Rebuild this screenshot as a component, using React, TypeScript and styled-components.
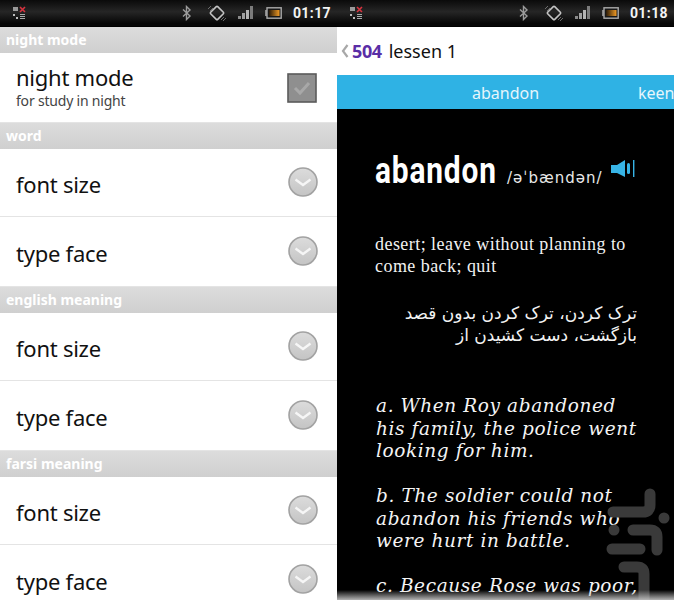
import React from 'react'
import styled, { createGlobalStyle } from 'styled-components'

const GlobalStyle = createGlobalStyle`
  html, body {
    margin: 0;
    padding: 0;
    background: #fff;
    overflow: hidden;
  }
  * {
    box-sizing: border-box;
  }
`

const Screens = styled.div`
  display: flex;
  width: 674px;
  height: 600px;
  overflow: hidden;
  font-family: 'Noto Sans', 'Open Sans', sans-serif;
`

const Screen = styled.div<{ $bg: string }>`
  position: relative;
  flex: none;
  display: flex;
  flex-direction: column;
  width: 337px;
  height: 600px;
  overflow: hidden;
  background: ${(p) => p.$bg};
`

const StatusBarWrap = styled.div`
  flex: none;
  display: flex;
  align-items: center;
  height: 27px;
  padding: 0 6px 1px 12px;
  background: linear-gradient(#0a0a0a, #262626 45%, #060606 90%);
  border-bottom: 1px solid #000;
`

const StatusRight = styled.div`
  display: flex;
  align-items: center;
  margin-left: auto;
`

const Clock = styled.span`
  margin-left: 11px;
  color: #f4f4f4;
  font-family: 'Roboto', sans-serif;
  font-size: 14px;
  font-weight: 700;
  letter-spacing: 0.4px;
`

const SectionHeader = styled.div`
  flex: none;
  height: 26px;
  padding-left: 6px;
  background: linear-gradient(#dcdcdc, #cfcfcf);
  color: #fff;
  font-size: 14px;
  font-weight: 700;
  line-height: 26px;
`

const Row = styled.div<{ $height: number }>`
  flex: none;
  display: flex;
  align-items: center;
  justify-content: space-between;
  height: ${(p) => p.$height}px;
  padding: 0 20px 0 16px;
  border-bottom: 1px solid #e4e4e4;
  background: #fff;
`

const RowText = styled.div`
  display: flex;
  flex-direction: column;
`

const RowTitle = styled.span`
  color: #111;
  font-size: 22px;
  letter-spacing: -0.25px;
  line-height: 30px;
`

const RowLabel = styled(RowTitle)`
  margin-top: 2px;
`

const NightTitle = styled(RowTitle)`
  line-height: 27px;
`

const RowSubtitle = styled.span`
  color: #444;
  font-size: 14px;
  letter-spacing: -0.2px;
  line-height: 20px;
`

const TitleBar = styled.div`
  flex: none;
  display: flex;
  align-items: center;
  height: 48px;
  padding-left: 4px;
  background: #fff;
`

const Brand = styled.span`
  margin-left: 3px;
  color: #5a2ea6;
  font-size: 18px;
  font-weight: 700;
  letter-spacing: -0.4px;
`

const LessonName = styled.span`
  margin-left: 7px;
  color: #111;
  font-size: 18px;
`

const Tabs = styled.div`
  position: relative;
  flex: none;
  height: 34px;
  background: #2fb2e4;
`

const Tab = styled.span<{ $left: number }>`
  position: absolute;
  top: 0;
  left: ${(p) => p.$left}px;
  color: #e6f6fc;
  font-size: 16px;
  line-height: 37px;
  white-space: nowrap;
`

const Content = styled.div`
  flex: 1;
  min-height: 0;
  padding: 43px 0 0 38px;
  background: #000;
  color: #f2f2f2;
`

const WordRow = styled.div`
  display: flex;
  align-items: flex-end;
  height: 38px;
`

const Word = styled.span`
  width: 132px;
  color: #fff;
  font-family: 'Roboto', sans-serif;
  font-size: 36px;
  font-weight: 700;
  letter-spacing: 1px;
  line-height: 38px;
  transform: scaleX(0.83);
  transform-origin: left;
`

const Phonetic = styled.span`
  color: #e8e8e8;
  font-family: 'DejaVu Sans', sans-serif;
  font-size: 15px;
  letter-spacing: 1px;
  line-height: 24px;
`

const Definition = styled.p`
  width: 270px;
  margin: 43px 0 0;
  font-family: 'Liberation Serif', serif;
  font-size: 18px;
  letter-spacing: 0.45px;
  line-height: 22px;
`

const Farsi = styled.p`
  width: 262px;
  margin: 25px 0 0;
  direction: rtl;
  font-family: 'DejaVu Sans', serif;
  font-size: 17px;
  line-height: 22px;
`

const Examples = styled.div`
  display: flex;
  flex-direction: column;
  gap: 22.5px;
  margin: 49px 0 0 1px;
`

const Example = styled.p`
  width: 262px;
  margin: 0;
  color: #f4f4f4;
  font-family: 'DejaVu Serif', serif;
  font-size: 18.5px;
  font-style: italic;
  letter-spacing: 0.6px;
  line-height: 22.5px;
`

const Watermark = styled.svg`
  position: absolute;
  right: 0;
  bottom: 0;
`

const BottomFade = styled.div`
  position: absolute;
  left: 0;
  right: 0;
  bottom: 0;
  height: 10px;
  background: linear-gradient(rgba(150, 150, 150, 0), rgba(190, 190, 190, 0.95));
`

const NotificationIcon = () => (
  <svg width="15" height="15" viewBox="0 0 15 15">
    <rect x="1" y="2" width="5" height="4" fill="#9a9a9a" />
    <path d="M8 2l5 5M13 2l-5 5" stroke="#d8333f" strokeWidth="1.6" />
    <rect x="1" y="9" width="2" height="2" fill="#bbb" />
    <rect x="4" y="12" width="2" height="2" fill="#bbb" />
    <path d="M8 9.5h5M8 11.5h5M8 13.5h5" stroke="#aaa" strokeWidth="1" />
  </svg>
)

const BluetoothIcon = () => (
  <svg width="12" height="16" viewBox="0 0 12 16">
    <path d="M2 4.5l7 6.5-3.5 3.5V1.5L9 5 2 11.5" fill="none" stroke="#9c9c9c" strokeWidth="1.4" />
  </svg>
)

const RotateIcon = () => (
  <svg width="20" height="18" viewBox="0 0 20 18" style={{ marginLeft: 14 }}>
    <rect x="5" y="4" width="10" height="10" rx="1" transform="rotate(45 10 9)" fill="none" stroke="#c4c4c4" strokeWidth="1.6" />
    <path d="M1 5l3-3M3 7l3-3M14 16l3-3M16 17l3-3" stroke="#777" strokeWidth="0.9" />
  </svg>
)

const SignalIcon = () => (
  <svg width="16" height="15" viewBox="0 0 16 15" style={{ marginLeft: 11 }}>
    <rect x="0" y="11" width="3" height="3" fill="#8a8a8a" />
    <rect x="4" y="8" width="3" height="6" fill="#a0a0a0" />
    <rect x="8" y="5" width="3" height="9" fill="#b4b4b4" />
    <rect x="12" y="1" width="3" height="13" fill="#7c7c7c" />
  </svg>
)

const BatteryIcon = () => (
  <svg width="17" height="12" viewBox="0 0 17 12" style={{ marginLeft: 11 }}>
    <defs>
      <linearGradient id="batteryFill" x1="0" x2="1" y1="0" y2="0">
        <stop offset="0" stopColor="#2a1a08" />
        <stop offset="1" stopColor="#f09a24" />
      </linearGradient>
    </defs>
    <rect x="0" y="3" width="2" height="6" fill="#8a8a8a" />
    <rect x="2" y="0.8" width="14.2" height="10.4" fill="#181818" stroke="#aaa" strokeWidth="1.4" />
    <rect x="4" y="3" width="10.5" height="6" fill="url(#batteryFill)" />
  </svg>
)

const StatusBar = ({ time }: { time: string }) => (
  <StatusBarWrap>
    <NotificationIcon />
    <StatusRight>
      <BluetoothIcon />
      <RotateIcon />
      <SignalIcon />
      <BatteryIcon />
      <Clock>{time}</Clock>
    </StatusRight>
  </StatusBarWrap>
)

const ExpandButton = () => (
  <svg width="30" height="30" viewBox="0 0 30 30" style={{ margin: '-2px -1px 0 0' }}>
    <defs>
      <linearGradient id="expandFill" x1="0" x2="0" y1="0" y2="1">
        <stop offset="0" stopColor="#dcdcdc" />
        <stop offset="1" stopColor="#c4c4c4" />
      </linearGradient>
    </defs>
    <circle cx="15" cy="15" r="14" fill="url(#expandFill)" stroke="#a2a2a2" strokeWidth="1.6" />
    <path d="M7.5 12.5l7.5 5.5 7.5-5.5" fill="none" stroke="#f6f6f6" strokeWidth="2.4" />
  </svg>
)

const Checkbox = () => (
  <svg width="30" height="30" viewBox="0 0 30 30">
    <rect x="1" y="1" width="28" height="28" fill="#8f8f8f" stroke="#5a5a5a" strokeWidth="1.6" />
    <path d="M8 15l5 5 9-10" fill="none" stroke="#a8a8a8" strokeWidth="3" />
  </svg>
)

const BackChevron = () => (
  <svg width="8" height="14" viewBox="0 0 8 14">
    <path d="M6.5 1L2 7l4.5 6" fill="none" stroke="#a8a8a8" strokeWidth="2.2" />
  </svg>
)

const SpeakerIcon = () => (
  <svg width="24" height="18" viewBox="0 0 24 18" style={{ margin: '0 0 12px 9px' }}>
    <path d="M0 5h6l8-5v17l-8-4H0z" fill="#37b4e6" />
    <rect x="16" y="3" width="3" height="11" rx="1.5" fill="#37b4e6" />
    <rect x="22" y="0" width="1.4" height="17" fill="#37b4e6" />
  </svg>
)

const BazaarMark = () => (
  <Watermark width="74" height="115" viewBox="0 0 74 115">
    <g fill="none" stroke="#3a3a3a" strokeWidth="11" strokeLinecap="round" strokeLinejoin="round">
      <path d="M50 9V20q0 7-7 7H13" />
      <path d="M64 33h0" />
      <path d="M14 45h0" />
      <path d="M33 45H50q7 0 7 7v13" />
      <path d="M12 64H40" />
      <path d="M24 82H37q7 0 7 7V120" />
    </g>
  </Watermark>
)

const settingGroups = ['word', 'english meaning', 'farsi meaning']

export default function App() {
  return (
    <Screens>
      <GlobalStyle />
      <Screen $bg="#fff">
        <StatusBar time="01:17" />
        <SectionHeader>night mode</SectionHeader>
        <Row $height={70}>
          <RowText>
            <NightTitle>night mode</NightTitle>
            <RowSubtitle>for study in night</RowSubtitle>
          </RowText>
          <Checkbox />
        </Row>
        {settingGroups.map((title) => (
          <React.Fragment key={title}>
            <SectionHeader>{title}</SectionHeader>
            <Row $height={68}>
              <RowLabel>font size</RowLabel>
              <ExpandButton />
            </Row>
            <Row $height={70}>
              <RowLabel>type face</RowLabel>
              <ExpandButton />
            </Row>
          </React.Fragment>
        ))}
      </Screen>
      <Screen $bg="#000">
        <StatusBar time="01:18" />
        <TitleBar>
          <BackChevron />
          <Brand>504</Brand>
          <LessonName>lessen 1</LessonName>
        </TitleBar>
        <Tabs>
          <Tab $left={135}>abandon</Tab>
          <Tab $left={301}>keen</Tab>
        </Tabs>
        <Content>
          <WordRow>
            <Word>abandon</Word>
            <Phonetic>/əˈbændən/</Phonetic>
            <SpeakerIcon />
          </WordRow>
          <Definition>desert; leave without planning to come back; quit</Definition>
          <Farsi>ترک کردن، ترک کردن بدون قصد بازگشت، دست کشیدن از</Farsi>
          <Examples>
            <Example>a. When Roy abandoned his family, the police went looking for him.</Example>
            <Example>b. The soldier could not abandon his friends who were hurt in battle.</Example>
            <Example>c. Because Rose was poor, she had to abandon her plan.</Example>
          </Examples>
        </Content>
        <BazaarMark />
        <BottomFade />
      </Screen>
    </Screens>
  )
}
